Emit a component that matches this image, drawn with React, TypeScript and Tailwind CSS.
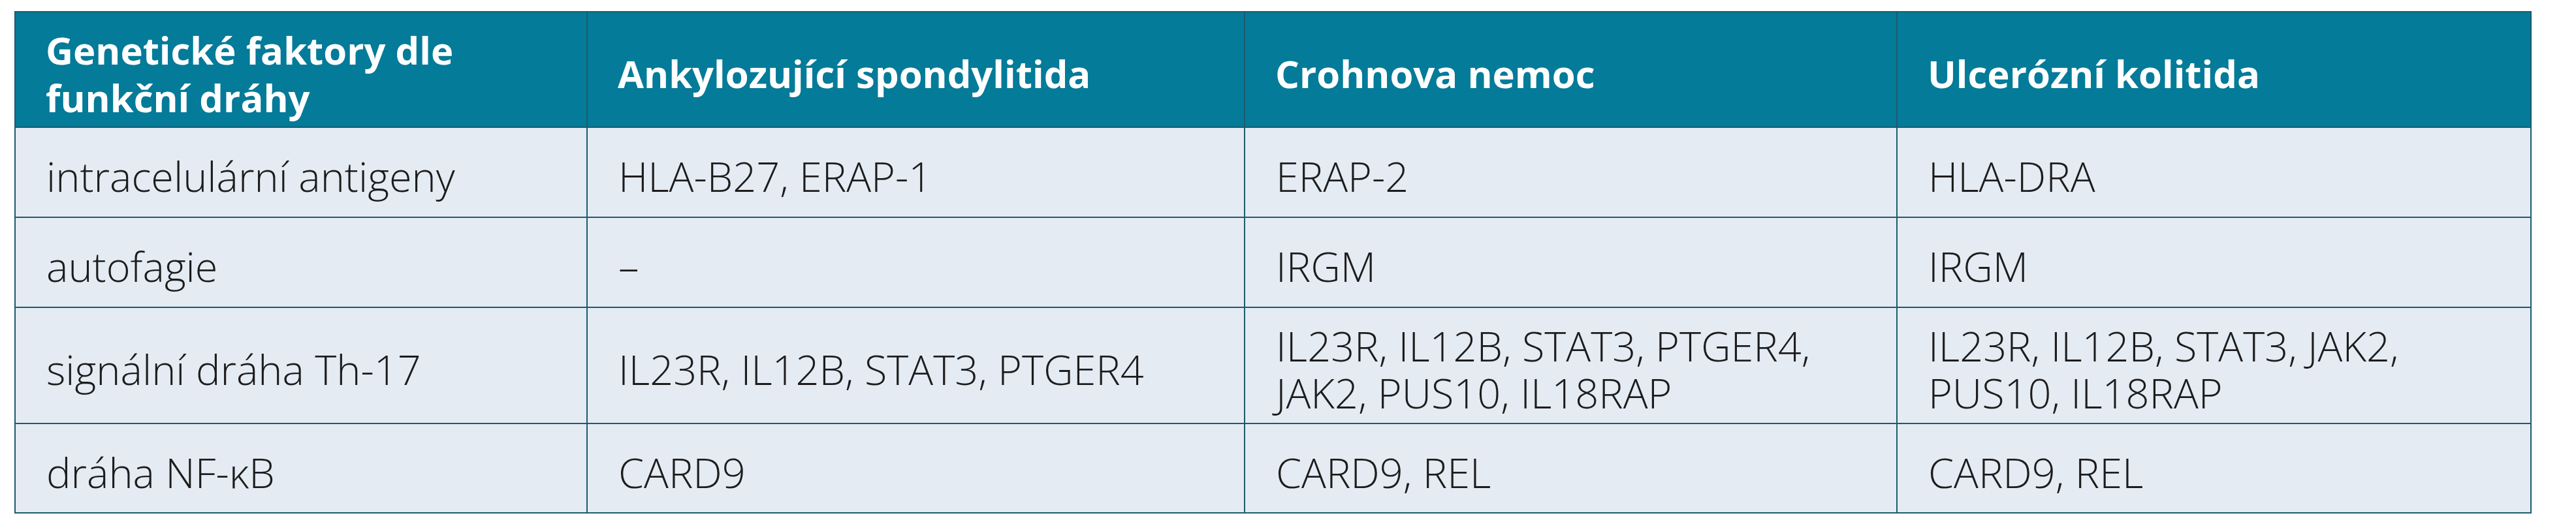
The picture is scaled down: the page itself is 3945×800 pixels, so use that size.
import { Fragment } from "react";

const HEAD = [
  ["Genetické faktory dle", "funkční dráhy"],
  ["Ankylozující spondylitida"],
  ["Crohnova nemoc"],
  ["Ulcerózní kolitida"],
];

const ROWS: { h: string; cells: string[][] }[] = [
  {
    h: "h-[138px]",
    cells: [["intracelulární antigeny"], ["HLA-B27, ERAP-1"], ["ERAP-2"], ["HLA-DRA"]],
  },
  {
    h: "h-[138px]",
    cells: [["autofagie"], ["–"], ["IRGM"], ["IRGM"]],
  },
  {
    h: "h-[178px]",
    cells: [
      ["signální dráha Th-17"],
      ["IL23R, IL12B, STAT3, PTGER4"],
      ["IL23R, IL12B, STAT3, PTGER4,", "JAK2, PUS10, IL18RAP"],
      ["IL23R, IL12B, STAT3, JAK2,", "PUS10, IL18RAP"],
    ],
  },
  {
    h: "h-[137px]",
    cells: [["dráha NF-κB"], ["CARD9"], ["CARD9, REL"], ["CARD9, REL"]],
  },
];

// explicit breaks so the wrapping matches the printed table
function Lines({ lines }: { lines: string[] }) {
  return (
    <>
      {lines.map((l, i) => (
        <Fragment key={i}>
          {i > 0 && <br />}
          {l}
        </Fragment>
      ))}
    </>
  );
}

export default function App() {
  return (
    <div className="min-h-[800px] w-[3945px] bg-white pl-[22px] pt-[17px] font-['Open_Sans',sans-serif]">
      <table className="w-[3853px] table-fixed border-collapse">
        <colgroup>
          <col className="w-[876px]" />
          <col className="w-[1007px]" />
          <col className="w-[999px]" />
          <col className="w-[971px]" />
        </colgroup>
        <thead>
          <tr className="h-[177px] bg-[#037b99]">
            {HEAD.map((lines, i) => (
              <th
                key={i}
                className="border-2 border-[#1d5b6e] pb-[2px] pl-[46px] pr-[30px] pt-[14px] text-left align-middle text-[58px] font-bold leading-[73px] text-white"
              >
                <Lines lines={lines} />
              </th>
            ))}
          </tr>
        </thead>
        <tbody>
          {ROWS.map((row, r) => (
            <tr key={r} className={`${row.h} bg-[#e4ebf3]`}>
              {row.cells.map((lines, i) => (
                <td
                  key={i}
                  className="border-2 border-[#1d5b6e] pb-[2px] pl-[47px] pr-[30px] pt-[14px] align-middle text-[63px] font-light leading-[72px] text-[#1c1c1c]"
                >
                  <Lines lines={lines} />
                </td>
              ))}
            </tr>
          ))}
        </tbody>
      </table>
    </div>
  );
}
